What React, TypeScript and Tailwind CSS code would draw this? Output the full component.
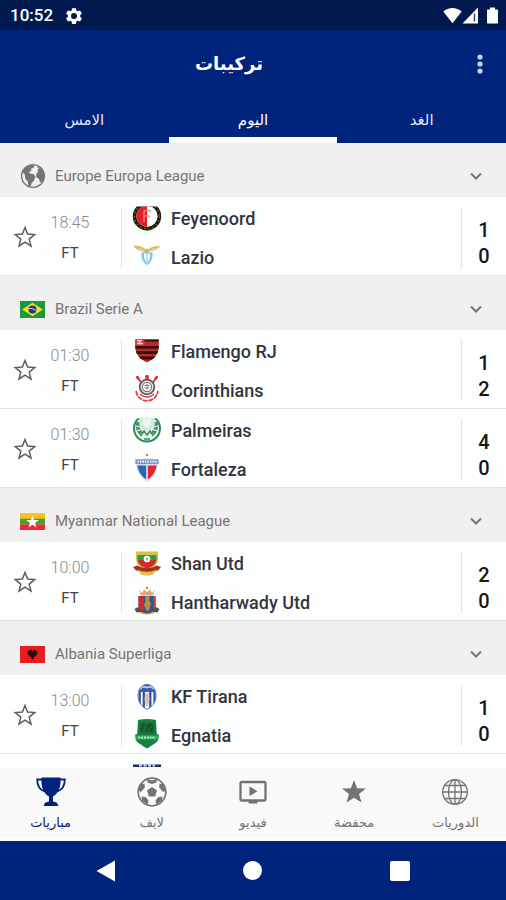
import { useState } from 'react';
import type { ReactNode } from 'react';

function Crest({ children }: { children: ReactNode }) {
  return (
    <svg viewBox="0 0 32 32" className="w-8 h-8 flex-shrink-0" aria-hidden="true">
      {children}
    </svg>
  );
}

const crests: Record<string, ReactNode> = {
  feyenoord: (
    <Crest>
      <clipPath id="fey">
        <rect x="0" y="5.5" width="32" height="26" />
      </clipPath>
      <g clipPath="url(#fey)">
        <circle cx="16" cy="15.3" r="14.2" fill="#1c1a12" />
        <circle cx="16" cy="15.3" r="12.5" fill="none" stroke="#77722f" strokeWidth="1.2" strokeDasharray="1.6 2.6" />
        <circle cx="16" cy="15.3" r="10.6" fill="#fff" />
        <path d="M16 4.7a10.6 10.6 0 0 0 0 21.2z" fill="#e21f26" />
        <path d="M13 9.500v11.500M13 9.500h3M13 15h3" stroke="#ef7f62" strokeWidth="1.600" fill="none" />
        <path d="M16 9.500h3.500v2M16 15h2.500v2" stroke="#e7aaa0" strokeWidth="1.400" fill="none" />
      </g>
    </Crest>
  ),
  lazio: (
    <Crest>
      <path d="M2.500 5.500c5 0 9 1 12 4l1.200-1.500 1.600 1.500C20 6.500 24.500 6 29.500 6c-2.500 3.200-6.500 4.500-11 5.500l-2.500 2-3-2C8.500 11 4 9 2.500 5.500z" fill="#dcb65c" />
      <path d="M7 8.300l6 1.700M25 8.300l-5.500 1.700" stroke="#f6e3ad" strokeWidth="0.800" />
      <path d="M10.500 12.500c3-.8 8-.8 11 0 .3 6-1 10-5.500 12.500-4.500-2.500-5.800-6.500-5.500-12.500z" fill="#82c3e8" />
      <path d="M13 13.500h6c.2 4.500-.8 7.500-3 9.500-2.200-2-3.200-5-3-9.500z" fill="#fff" />
      <path d="M16 13v9" stroke="#9dcdea" strokeWidth="1.200" />
    </Crest>
  ),
  flamengo: (
    <Crest>
      <clipPath id="fla">
        <path d="M4.500 5.500h23.200c.3 5 .3 9-.7 12-1.500 5-5.500 8.500-11 10.800-5.500-2.300-9.500-5.800-11-10.800-1-3-.8-7-.5-12z" />
      </clipPath>
      <g clipPath="url(#fla)">
        <rect x="3" y="4" width="26" height="26" fill="#b92a22" />
        <path d="M3 6h26M3 13.300h26M3 18.600h26M3 24h26" stroke="#30100f" strokeWidth="2.800" />
        <rect x="4" y="5" width="9.500" height="6.500" fill="#d23a32" />
        <path d="M6 6.500h5M8.500 6v4.500M6 9.500h6" stroke="#f8ded8" strokeWidth="1.400" />
      </g>
    </Crest>
  ),
  corinthians: (
    <Crest>
      <path d="M6 4l6 8M26 4l-6 8" stroke="#e03038" strokeWidth="2" />
      <path d="M4.800 3.500c2-1.500 4 .5 4.200 3.500-2 .3-4-1-4.200-3.500zM27.200 3.500c-2-1.500-4 .5-4.200 3.500 2 .3 4-1 4.200-3.500z" fill="#e03038" />
      <path d="M14 3.500c0-2 4-2 4 0l-.8 4h-2.400z" fill="#e03038" />
      <circle cx="16" cy="14" r="7.300" fill="#eee" stroke="#5a5a60" strokeWidth="1.800" />
      <circle cx="16" cy="14" r="4.600" fill="#fff" stroke="#77777e" strokeWidth="1.200" />
      <path d="M13.500 12.500h5M13.500 15h5M16 11v6" stroke="#bb6a70" strokeWidth="1" />
      <path d="M5 18c1 6 5 9.500 11 9.800 6-.3 10-3.800 11-9.800" fill="none" stroke="#e03038" strokeWidth="1.600" strokeDasharray="5 0.800" />
      <path d="M9 21c4 4 10 4 14 0" fill="none" stroke="#e03038" strokeWidth="1.300" />
    </Crest>
  ),
  palmeiras: (
    <Crest>
      <clipPath id="pal">
        <rect x="0" y="5.300" width="32" height="26" />
      </clipPath>
      <g clipPath="url(#pal)">
        <circle cx="16" cy="15.500" r="13" fill="#e9f5ec" stroke="#2f8b5b" strokeWidth="2" />
        <path d="M5.500 9c-1.500 5 0 10 3.500 13l2.500-3.500C9 16.500 8 12.500 8.500 9zM26.500 9c1.500 5 0 10-3.500 13l-2.500-3.500c2.500-2 3.500-6 3-9.500z" fill="#3f9768" />
        <path d="M5 13l4 1M6 18l4-1.500M27 13l-4 1M26 18l-4-1.500" stroke="#e9f5ec" strokeWidth="1.100" />
        <path d="M8.500 4h15v6c0 4-3 6-7.500 8-4.500-2-7.500-4-7.500-8z" fill="#cfe8d8" />
        <path d="M12 6h8v4c0 2.500-1.500 3.500-4 5-2.500-1.500-4-2.500-4-5z" fill="#eef7f0" />
        <path d="M9.500 23l3.500-5 3 4 3-4 3.500 5M13 26h6" fill="none" stroke="#2f8b5b" strokeWidth="1.600" />
      </g>
    </Crest>
  ),
  fortaleza: (
    <Crest>
      <circle cx="16" cy="3" r="1.300" fill="#c98d3a" />
      <path d="M4.300 7.500l11.700-1.500 11.700 1.500c.2 9-3.700 17.500-11.700 22.500C8 25 4.100 16.500 4.300 7.500z" fill="#dfe7f4" />
      <path d="M6.300 13.500h8.900v14C10.500 24.500 7.300 19.500 6.300 13.500z" fill="#2667b5" />
      <path d="M16.800 13.500h8.900c-1 6-4.200 11-8.900 14z" fill="#e0282f" />
      <path d="M4.400 7.300h23.200v4.800H4.400z" fill="#7994c9" />
      <path d="M6.500 9.700h19" stroke="#e6ecf8" strokeWidth="2.200" strokeDasharray="1.500 1" />
    </Crest>
  ),
  shan: (
    <Crest>
      <path d="M5 5.500h22v7c0 6-4 9.500-11 12-7-2.500-11-6-11-12z" fill="#d9c33c" />
      <path d="M6.500 9h19v4c0 5-4 7.500-9.500 9.500-5.500-2-9.500-4.500-9.500-9.500z" fill="#2f9d43" />
      <path d="M7 14h18c-.8 5-4.500 6.700-9 8.300-4.500-1.600-8.200-3.300-9-8.300z" fill="#d9292b" />
      <circle cx="16" cy="13" r="3.300" fill="#fff" />
      <path d="M14.500 12.500l1.500-1.500 1.500 2-1.500 2z" fill="#8cb79a" />
      <path d="M2 21l4.500-1.500c6 3.500 13 3.500 19 0L30 21l-3 3.500c-7 2.500-15 2.500-22 0z" fill="#a82c23" />
      <path d="M6 24.500c6 2.500 14 2.500 20 0M9 27l5 1.500h4l5-1.500" stroke="#e0b83c" strokeWidth="1.800" fill="none" />
    </Crest>
  ),
  hantharwady: (
    <Crest>
      <path d="M8 5l3 3 2-3.500 3 2.500 3-2.500 2 3.500 3-3-2 5.500H10z" fill="#d9a77b" />
      <circle cx="16" cy="3" r="1.300" fill="#c78c58" />
      <path d="M7.500 11h17v10c0 4-4 6-8.500 7.500-4.500-1.500-8.500-3.500-8.500-7.500z" fill="#2254a0" />
      <path d="M7.500 11H13v16c-3.500-1.500-5.500-3-5.500-6z" fill="#c92a33" />
      <path d="M22 11h2.500v10c0 3-1 4-2.500 5z" fill="#d3343a" />
      <path d="M14 12l2-1.500 3 2-1 3 2 3-2 7h-3l-2-6 1.500-3z" fill="#b98f35" />
      <path d="M3.500 24l3.500-2c2 3 5 4.500 9 4.500s7-1.500 9-4.500l3.500 2-2 3.500-5-.5c-3.500 2-7.500 2-11 0l-5 .5z" fill="#4d5458" />
      <path d="M9 27.500c4 1.500 10 1.500 14 0" stroke="#b99d50" strokeWidth="1.300" fill="none" />
    </Crest>
  ),
  tirana: (
    <Crest>
      <clipPath id="tir">
        <path d="M16 5.500c5.500 0 9 4.500 9 11.500 0 6-3.500 11-9 13.300C10.500 28 7 23 7 17 7 10 10.500 5.500 16 5.500z" />
      </clipPath>
      <g clipPath="url(#tir)">
        <rect x="6" y="5" width="20" height="26" fill="#f6f7fb" />
        <path d="M8.700 11v18M12.800 13v18M19.300 13v18M23.500 11v18" stroke="#3450a0" strokeWidth="2.200" />
        <path d="M6 5h20v8H6z" fill="#3c5cab" />
        <path d="M9 10l3-2.500 4 1 4-1 3 2.500" stroke="#c8d3ee" strokeWidth="1.700" fill="none" />
        <path d="M14.500 14h3l1 6-1.500 7h-2l-1.500-7z" fill="#dfc6a0" />
      </g>
      <path d="M16 5.500c5.500 0 9 4.500 9 11.500 0 6-3.500 11-9 13.300C10.500 28 7 23 7 17 7 10 10.500 5.500 16 5.500z" fill="none" stroke="#5872b5" strokeWidth="0.900" />
    </Crest>
  ),
  egnatia: (
    <Crest>
      <path d="M7 2c6-1.300 12-1.300 18 0l.8 14 2 .5-1 6.500C24 25.500 20 28 16 30.500c-4-2.500-8-5-10.800-7.500l-1-6.500 2-.5z" fill="#178240" />
      <path d="M9 4.500h14l.5 11h-15z" fill="#196a38" />
      <path d="M10 13l3-7M15 14l2-5 3-3M19 14l3-5" stroke="#104c29" strokeWidth="1.800" fill="none" />
      <path d="M4.500 17.300h23v4.400h-23z" fill="#2ea258" />
      <path d="M7.500 19.500h17" stroke="#c7f0d3" strokeWidth="2.200" strokeDasharray="1.800 1" />
    </Crest>
  ),
  navy: (
    <Crest>
      <path d="M2 6.500h28v16l-14 8-14-8z" fill="#1d2a5c" />
      <path d="M8 7.500h16" stroke="#dfe3f2" strokeWidth="2" strokeDasharray="3 1.500" />
    </Crest>
  ),
};

const flags: Record<string, ReactNode> = {
  europe: (
    <svg viewBox="0 0 26 26" className="w-[26px] h-[26px]" aria-hidden="true">
      <circle cx="13" cy="13" r="11.400" fill="#f0f0f0" stroke="#747474" strokeWidth="1.400" />
      <path d="M2.500 9C4 5 8 2 12 2l2.500.8-1 2.200-2.500.5.5 2-2.500 1.500 1 1.500 3.500.5 2 2.500-1.500 4-2.500 3-1 3.500-2-1-1-5-2.500-2.500L5 12z" fill="#747474" />
      <path d="M17 3l4 2.500L24 10l.3 4-2 4.500-2.300 1-1-3.500-2.500-1.500-.5-3.500 2-2-.5-2 1.500-1.500-1.500-1z" fill="#747474" />
    </svg>
  ),
  brazil: (
    <svg viewBox="0 0 25 17" className="w-[25px] h-[17px]" aria-hidden="true">
      <rect width="25" height="17" fill="#169b3b" />
      <path d="M12.500 1.800L22.800 8.500 12.500 15.200 2.200 8.500z" fill="#f8dc21" />
      <circle cx="12.500" cy="8.500" r="4" fill="#213b7c" />
      <path d="M8.800 7.600c2.600-.5 5.200.2 7.300 2.200" stroke="#e8edf5" strokeWidth="0.900" fill="none" />
    </svg>
  ),
  myanmar: (
    <svg viewBox="0 0 25 17" className="w-[25px] h-[17px]" aria-hidden="true">
      <rect width="25" height="6" fill="#fbc21d" />
      <rect y="5.700" width="25" height="5.600" fill="#3aa537" />
      <rect y="11.300" width="25" height="5.700" fill="#e92b35" />
      <path d="M12.500 2.500l1.500 4.600h4.900L15 10l1.500 4.600-4-2.900-4 2.900L10 10 6.100 7.100H11z" fill="#fff" />
    </svg>
  ),
  albania: (
    <svg viewBox="0 0 25 17" className="w-[25px] h-[17px]" aria-hidden="true">
      <rect width="25" height="17" fill="#e81c23" />
      <path d="M12.500 5l-1.500-1.500-1.700.7 1 1-3-.7.7 2-.7.5 1.200 1-.7 1 1.500.3-.5 1.500 2-.5.3 1.700 1.400 2 1.400-2 .3-1.700 2 .5-.5-1.500 1.500-.3-.7-1 1.200-1-.7-.5.7-2-3 .7 1-1-1.700-.7z" fill="#2c0b0b" />
    </svg>
  ),
};

type Team = { name: string; crest: string; score: string };
type Match = { id: string; time: string; home: Team; away: Team };
type League = { name: string; flag: string; matches: Match[] };

const leagues: League[] = [
  {
    name: 'Europe Europa League',
    flag: 'europe',
    matches: [
      {
        id: 'm1',
        time: '18:45',
        home: { name: 'Feyenoord', crest: 'feyenoord', score: '1' },
        away: { name: 'Lazio', crest: 'lazio', score: '0' },
      },
    ],
  },
  {
    name: 'Brazil Serie A',
    flag: 'brazil',
    matches: [
      {
        id: 'm2',
        time: '01:30',
        home: { name: 'Flamengo RJ', crest: 'flamengo', score: '1' },
        away: { name: 'Corinthians', crest: 'corinthians', score: '2' },
      },
      {
        id: 'm3',
        time: '01:30',
        home: { name: 'Palmeiras', crest: 'palmeiras', score: '4' },
        away: { name: 'Fortaleza', crest: 'fortaleza', score: '0' },
      },
    ],
  },
  {
    name: 'Myanmar National League',
    flag: 'myanmar',
    matches: [
      {
        id: 'm4',
        time: '10:00',
        home: { name: 'Shan Utd', crest: 'shan', score: '2' },
        away: { name: 'Hantharwady Utd', crest: 'hantharwady', score: '0' },
      },
    ],
  },
  {
    name: 'Albania Superliga',
    flag: 'albania',
    matches: [
      {
        id: 'm5',
        time: '13:00',
        home: { name: 'KF Tirana', crest: 'tirana', score: '1' },
        away: { name: 'Egnatia', crest: 'egnatia', score: '0' },
      },
    ],
  },
];

function StatusBar() {
  return (
    <div className="h-[30px] flex-shrink-0 flex items-center justify-between pt-px pl-[10px] pr-2 bg-[#001a50] text-white">
      <div className="flex items-center gap-3">
        <span className="text-[17px] font-medium">10:52</span>
        <svg viewBox="0 0 24 24" className="w-[18px] h-[18px]" fill="currentColor" aria-hidden="true">
          <path
            fillRule="evenodd"
            d="M9.500 1.500h5l.7 3.200 1.700 1 3.200-1.100 2.500 4.300-2.500 2.200v1.800l2.500 2.200-2.500 4.300-3.200-1.100-1.700 1-.7 3.200h-5l-.7-3.200-1.700-1-3.200 1.100-2.500-4.300 2.500-2.200v-1.800L1.400 8.900l2.500-4.300 3.200 1.100 1.700-1zM12 8a4 4 0 1 0 0 8 4 4 0 0 0 0-8z"
          />
        </svg>
      </div>
      <div className="flex items-center">
        <svg viewBox="0 0 19 17" className="w-[19px] h-[17px]" fill="currentColor" aria-hidden="true">
          <path d="M.3 4.500C5.500-.3 13.500-.3 18.700 4.500L9.500 16.300z" />
        </svg>
        <svg viewBox="0 0 17 17" className="w-[17px] h-[17px]" aria-hidden="true">
          <path d="M16 .5V16.500H.5z" fill="#fff" />
          <path d="M12.500 6.500v8" stroke="#3a4565" strokeWidth="1.500" />
        </svg>
        <svg viewBox="0 0 11 17" className="w-[11px] h-[17px] ml-2" fill="currentColor" aria-hidden="true">
          <path d="M3 .5h5v2h2c.6 0 1 .4 1 1v12c0 .6-.4 1-1 1H1c-.6 0-1-.4-1-1v-12c0-.6.4-1 1-1h2z" />
        </svg>
      </div>
    </div>
  );
}

function TeamLine({ team }: { team: Team }) {
  return (
    <div className="h-[38px] flex items-center gap-2">
      {crests[team.crest]}
      <span className="pt-[3px] text-lg leading-6 font-medium text-[#33343e]">{team.name}</span>
    </div>
  );
}

function MatchRow({ match }: { match: Match }) {
  const [starred, setStarred] = useState(false);

  return (
    <div className="h-[79px] flex bg-[#fdfffe] border-b border-[#e0e1e0]">
      <button
        aria-label="Favourite"
        aria-pressed={starred}
        onClick={() => setStarred(!starred)}
        className="w-[50px] pt-0.5 flex items-center justify-center text-[#5e5e5e]"
      >
        <svg
          viewBox="0 0 24 24"
          className="w-6 h-6"
          fill={starred ? 'currentColor' : 'none'}
          stroke="currentColor"
          strokeWidth="1.500"
          aria-hidden="true"
        >
          <path d="M12 2.500l2.600 6.600 7.100.5-5.500 4.500 1.800 6.900-6-3.800L6 21l1.800-6.900-5.500-4.500 7.100-.5z" />
        </svg>
      </button>
      <div className="w-10 pt-1 flex flex-col items-center justify-center gap-[6px]">
        <span className="text-base leading-6 font-light text-[#8a8a8a]">{match.time}</span>
        <span className="text-[15px] leading-6 text-[#444444]">FT</span>
      </div>
      <div className="ml-[31px] mt-[10px] mb-[7px] w-px bg-[#e4e4e4]" />
      <div className="flex-1 ml-[9px] pt-px flex flex-col gap-px">
        <TeamLine team={match.home} />
        <TeamLine team={match.away} />
      </div>
      <div className="mt-[10px] mb-[7px] w-px bg-[#e4e4e4]" />
      <div className="w-11 pt-5 flex flex-col items-center text-xl leading-[26px] font-medium text-[#161616]">
        <span>{match.home.score}</span>
        <span>{match.away.score}</span>
      </div>
    </div>
  );
}

function LeagueSection({ league }: { league: League }) {
  const [open, setOpen] = useState(true);

  return (
    <section>
      <button
        onClick={() => setOpen(!open)}
        className="w-full h-[54px] pt-3 pl-5 pr-6 flex items-center bg-[#f0f0f0] text-[#757575]"
      >
        <span className="w-[35px] flex items-center">{flags[league.flag]}</span>
        <span className="flex-1 text-left text-[15px]">{league.name}</span>
        <svg viewBox="0 0 12 12" className="w-3 h-3" fill="none" stroke="currentColor" strokeWidth="2" aria-hidden="true">
          <path d="M1 3.500l5 5 5-5" />
        </svg>
      </button>
      {open && league.matches.map(match => <MatchRow key={match.id} match={match} />)}
    </section>
  );
}

const navItems: { label: string; icon: ReactNode }[] = [
  {
    label: 'مباريات',
    icon: (
      <svg viewBox="0 0 32 32" className="w-8 h-8" aria-hidden="true">
        <path d="M6.500 1.500h19c.8 9-2 16-7.500 19v5c3.500.3 5 1.700 5.300 4.500H8.700c.3-2.800 1.800-4.200 5.300-4.500v-5C8.500 17.500 5.700 10.500 6.500 1.500z" fill="currentColor" />
        <path d="M7 3.500H2.200c0 6 2.300 10 7.300 12M25 3.500h4.800c0 6-2.300 10-7.300 12" fill="none" stroke="currentColor" strokeWidth="1.800" />
      </svg>
    ),
  },
  {
    label: 'لايف',
    icon: (
      <svg viewBox="0 0 32 32" className="w-8 h-8" aria-hidden="true">
        <circle cx="16" cy="16" r="13.800" fill="#fafafa" stroke="currentColor" strokeWidth="1.700" />
        <path d="M16 11l5 3.600-1.900 5.900h-6.200L11 14.600zM11 3l5 1.500L21 3l-.5 3.500L16 8l-4.500-1.500zM2.200 14.500L5 8l3.500-.5.300 4-3.800 4.500zM29.800 14.500L27 8l-3.500-.5-.3 4 3.800 4.500zM6 24.500l-.5-4 4 .5 3 3.500-1 4.500zM26 24.500l.5-4-4 .5-3 3.500 1 4.500z" fill="currentColor" />
      </svg>
    ),
  },
  {
    label: 'فيديو',
    icon: (
      <svg viewBox="0 0 32 32" className="w-8 h-8" aria-hidden="true">
        <rect x="3.500" y="6" width="25" height="18.500" rx="1.500" fill="none" stroke="currentColor" strokeWidth="2.300" />
        <path d="M12.500 10.500v9.500l8-4.750zM11.500 25h9v2.500h-9z" fill="currentColor" />
      </svg>
    ),
  },
  {
    label: 'محفضة',
    icon: (
      <svg viewBox="0 0 32 32" className="w-8 h-8" aria-hidden="true">
        <path d="M16 4l3.100 8.300 8.900.3-7 5.500 2.500 8.500L16 21.700l-7.500 4.900 2.500-8.500-7-5.500 8.900-.3z" fill="currentColor" />
      </svg>
    ),
  },
  {
    label: 'الدوريات',
    icon: (
      <svg viewBox="0 0 32 32" className="w-8 h-8" fill="none" stroke="currentColor" strokeWidth="1.300" aria-hidden="true">
        <circle cx="16" cy="16" r="12.300" />
        <ellipse cx="16" cy="16" rx="6.500" ry="12.300" />
        <path d="M16 3.700v24.600M3.700 16h24.600M5.500 9.500h21M5.500 22.500h21" />
      </svg>
    ),
  },
];

const tabs = ['الامس', 'اليوم', 'الغد'];

export default function App() {
  const [activeTab, setActiveTab] = useState(1);
  const [activeNav, setActiveNav] = useState(0);

  return (
    <div className="h-screen flex flex-col overflow-hidden bg-[#fdfffe] font-[Roboto,'Noto_Sans','DejaVu_Sans',sans-serif]">
      <StatusBar />

      {/* App bar */}
      <header className="flex-shrink-0 bg-[#00237c] text-white">
        <div className="h-[68px] flex items-center">
          <h1 dir="rtl" className="flex-1 text-center text-lg font-bold">تركيبات</h1>
          <button aria-label="Menu" className="w-12 h-12 pr-1 flex items-center justify-center text-[#c9d2ec]">
            <svg viewBox="0 0 24 24" className="w-6 h-6" fill="currentColor" aria-hidden="true">
              <circle cx="12" cy="5" r="2.600" />
              <circle cx="12" cy="12" r="2.600" />
              <circle cx="12" cy="19" r="2.600" />
            </svg>
          </button>
        </div>
        <nav className="flex">
          {tabs.map((tab, i) => (
            <button
              key={tab}
              dir="rtl"
              onClick={() => setActiveTab(i)}
              className={`flex-1 h-[45px] pt-[6px] text-[15px] border-b-[6px] ${
                activeTab === i ? 'border-white text-white' : 'border-transparent text-[#e3e8f5]'
              }`}
            >
              {tab}
            </button>
          ))}
        </nav>
      </header>

      {/* Match list */}
      <main className="flex-1 min-h-0 overflow-hidden">
        {leagues.map(league => (
          <LeagueSection key={league.name} league={league} />
        ))}
        <div className="pl-[131px] pt-1">{crests.navy}</div>
      </main>

      {/* Bottom navigation */}
      <nav className="h-[74px] flex-shrink-0 flex bg-[#f9f9f9] border-b-[3px] border-white">
        {navItems.map((item, i) => (
          <button
            key={item.label}
            onClick={() => setActiveNav(i)}
            className={`flex-1 pt-[9px] flex flex-col items-center gap-[3px] ${
              activeNav === i ? 'text-[#00237c]' : 'text-[#737373]'
            }`}
          >
            {item.icon}
            <span dir="rtl" className="text-[13px] leading-6">{item.label}</span>
          </button>
        ))}
      </nav>

      {/* System keys */}
      <div className="h-[59px] flex-shrink-0 px-8 flex bg-[#00237c] text-white">
        <button aria-label="Back" className="flex-1 flex items-center justify-center">
          <svg viewBox="0 0 20 22" className="w-5 h-[22px]" fill="currentColor" aria-hidden="true">
            <path d="M19 .5v21L.5 11z" />
          </svg>
        </button>
        <button aria-label="Home" className="flex-1 flex items-center justify-center">
          <span className="w-[19px] h-[19px] rounded-full bg-white" />
        </button>
        <button aria-label="Recents" className="flex-1 flex items-center justify-center">
          <span className="w-5 h-5 rounded-xs bg-white" />
        </button>
      </div>
    </div>
  );
}
